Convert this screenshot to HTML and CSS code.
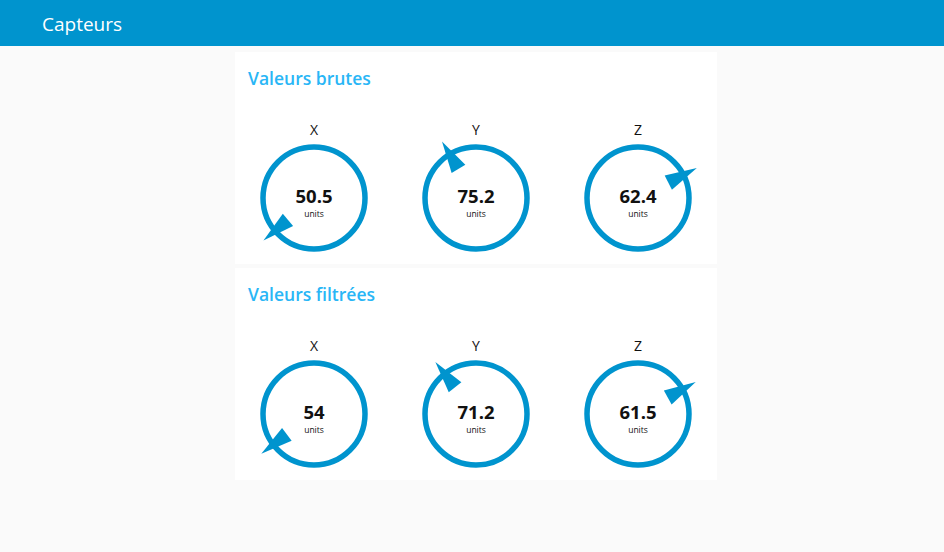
FILE: index.html
```html
<!DOCTYPE html>
<html lang="fr">
<head>
<meta charset="utf-8">
<title>Capteurs</title>
<link rel="stylesheet" href="styles.css">
</head>
<body>
<header class="topbar"><h1 class="topbar-title">Capteurs</h1></header>
<main class="content">
  <section class="card">
    <h2 class="card-title">Valeurs brutes</h2>
    <div class="gauges">
      <div class="gauge">
        <div class="gauge-label">X</div>
        <div class="gauge-body">
          <svg class="dial" width="158" height="116" viewBox="-79 -58 158 116">
            <circle class="ring" r="51"/>
            <polygon class="needle" points="34,-8 66,0 34,8" transform="rotate(140)"/>
          </svg>
          <div class="readout"><div class="val">50.5</div><div class="unit">units</div></div>
        </div>
      </div>
      <div class="gauge">
        <div class="gauge-label">Y</div>
        <div class="gauge-body">
          <svg class="dial" width="158" height="116" viewBox="-79 -58 158 116">
            <circle class="ring" r="51"/>
            <polygon class="needle" points="34,-8 66,0 34,8" transform="rotate(-121)"/>
          </svg>
          <div class="readout"><div class="val">75.2</div><div class="unit">units</div></div>
        </div>
      </div>
      <div class="gauge">
        <div class="gauge-label">Z</div>
        <div class="gauge-body">
          <svg class="dial" width="158" height="116" viewBox="-79 -58 158 116">
            <circle class="ring" r="51"/>
            <polygon class="needle" points="34,-8 66,0 34,8" transform="rotate(-27)"/>
          </svg>
          <div class="readout"><div class="val">62.4</div><div class="unit">units</div></div>
        </div>
      </div>
    </div>
  </section>
  <section class="card">
    <h2 class="card-title">Valeurs filtrées</h2>
    <div class="gauges">
      <div class="gauge">
        <div class="gauge-label">X</div>
        <div class="gauge-body">
          <svg class="dial" width="158" height="116" viewBox="-79 -58 158 116">
            <circle class="ring" r="51"/>
            <polygon class="needle" points="34,-8 66,0 34,8" transform="rotate(143)"/>
          </svg>
          <div class="readout"><div class="val">54</div><div class="unit">units</div></div>
        </div>
      </div>
      <div class="gauge">
        <div class="gauge-label">Y</div>
        <div class="gauge-body">
          <svg class="dial" width="158" height="116" viewBox="-79 -58 158 116">
            <circle class="ring" r="51"/>
            <polygon class="needle" points="34,-8 66,0 34,8" transform="rotate(-128)"/>
          </svg>
          <div class="readout"><div class="val">71.2</div><div class="unit">units</div></div>
        </div>
      </div>
      <div class="gauge">
        <div class="gauge-label">Z</div>
        <div class="gauge-body">
          <svg class="dial" width="158" height="116" viewBox="-79 -58 158 116">
            <circle class="ring" r="51"/>
            <polygon class="needle" points="34,-8 66,0 34,8" transform="rotate(-29)"/>
          </svg>
          <div class="readout"><div class="val">61.5</div><div class="unit">units</div></div>
        </div>
      </div>
    </div>
  </section>
</main>
</body>
</html>
```

FILE: styles.css
```css
* { box-sizing: border-box; }

html, body {
  margin: 0;
  padding: 0;
  background: #fafafa;
  font-family: "Open Sans", "Noto Sans", "Liberation Sans", sans-serif;
  color: #111;
}

.topbar {
  height: 46px;
  background: #0094ce;
  display: flex;
  align-items: center;
  padding-left: 42px;
}

.topbar-title {
  margin: 0;
  font-size: 19px;
  font-weight: 400;
  color: #fff;
  line-height: 1;
  position: relative;
  top: 1px;
}

.content {
  display: flex;
  flex-direction: column;
  gap: 4px;
  padding: 6px 0 0 235px;
}

.card {
  width: 482px;
  height: 212px;
  background: #fff;
}

.card-title {
  margin: 0;
  padding: 14px 0 0 13px;
  height: 68px;
  font-size: 17.5px;
  font-weight: 600;
  line-height: 24px;
  color: #29b6f6;
}

.gauges {
  display: grid;
  grid-template-columns: repeat(3, 158px);
  column-gap: 4px;
}

.gauge {
  display: flex;
  flex-direction: column;
  align-items: center;
}

.gauge-label {
  height: 20px;
  line-height: 20px;
  font-size: 14px;
  color: #111;
}

.gauge-body {
  position: relative;
  width: 158px;
  height: 116px;
}

.dial {
  display: block;
  overflow: visible;
}

.ring {
  fill: none;
  stroke: #0094ce;
  stroke-width: 5.5;
}

.needle {
  fill: #0094ce;
}

.readout {
  position: absolute;
  top: 42.7px;
  left: 0;
  right: 0;
  text-align: center;
}

.val {
  font-size: 18.5px;
  line-height: normal;
  font-weight: 700;
  color: #111;
}

.unit {
  margin-top: 0.5px;
  font-size: 8.5px;
  line-height: normal;
  color: #111;
}
```
